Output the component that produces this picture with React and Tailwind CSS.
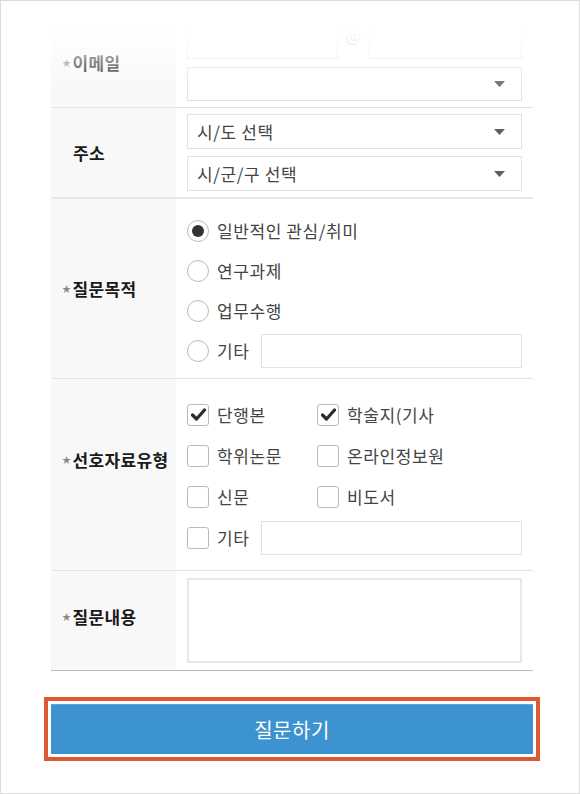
import { useState } from 'react'

const font = { fontFamily: '"Noto Sans CJK KR", "Noto Sans", sans-serif' }

function Arrow() {
  return (
    <svg width="11" height="6" viewBox="0 0 11 6" className="shrink-0">
      <path d="M0 0 H11 L5.5 6 Z" fill="#56616d" />
    </svg>
  )
}

function Select({ label, h = 'h-[35px]' }) {
  return (
    <div className={`flex items-center justify-between border border-[#e2e2e2] bg-white pl-[9px] pr-[16px] ${h}`}>
      <span className="text-[17px] tracking-[0.6px] text-[#444]">{label}</span>
      <Arrow />
    </div>
  )
}

function Label({ text, star = true, pad = '' }) {
  return (
    <div className={`flex items-center bg-[#f8f8f8] pl-[11px] ${pad}`}>
      {star ? (
        <span className="flex items-center text-[17px] font-bold tracking-[0.4px] text-[#1a1a1a]">
          <span className="mr-[1px] text-[9px] text-[#888]">★</span>
          {text}
        </span>
      ) : (
        <span className="pl-[11px] text-[17px] font-bold tracking-[0.4px] text-[#1a1a1a]">{text}</span>
      )}
    </div>
  )
}

function Radio({ checked, onClick, children }) {
  return (
    <div className="flex h-[40px] items-center" onClick={onClick}>
      <span className="flex h-[22px] w-[22px] shrink-0 items-center justify-center rounded-full border border-[#bbb] bg-white">
        {checked && <span className="h-[12px] w-[12px] rounded-full bg-[#333]" />}
      </span>
      <span className="ml-[8px] text-[17px] tracking-[0.6px] text-[#444]">{children}</span>
    </div>
  )
}

function Check({ checked, onClick, label }) {
  return (
    <div className="flex items-center" onClick={onClick}>
      <span className="flex h-[22px] w-[22px] shrink-0 items-center justify-center rounded-[3px] border border-[#bbb] bg-white">
        {checked && (
          <svg width="15" height="13" viewBox="0 0 15 13">
            <path d="M1.5 7 L5.5 11 L13.5 2" fill="none" stroke="#2b2b2b" strokeWidth="3.2" strokeLinecap="round" strokeLinejoin="round" />
          </svg>
        )}
      </span>
      <span className="ml-[8px] text-[17px] tracking-[0.6px] text-[#444]">{label}</span>
    </div>
  )
}

export default function App() {
  const [purpose, setPurpose] = useState(0)
  const [types, setTypes] = useState({ 단행본: true, '학술지(기사': true })
  const toggle = k => setTypes(t => ({ ...t, [k]: !t[k] }))

  const purposes = ['일반적인 관심/취미', '연구과제', '업무수행']
  const typeRows = [
    ['단행본', '학술지(기사'],
    ['학위논문', '온라인정보원'],
    ['신문', '비도서'],
  ]

  return (
    <div className="relative h-[794px] w-[580px] overflow-hidden border border-[#dcdcdc] bg-white" style={font}>
      <div className="pl-[50px] pr-[46px]">
        {/* 이메일 */}
        <div className="grid grid-cols-[125px_1fr] border-b border-[#e4e4e4]">
          <Label text="이메일" pad="pt-[18px]" />
          <div className="flex flex-col gap-[8px] px-[11px] pb-[6px] pt-[23px]">
            <div className="flex h-[35px] items-stretch">
              <div className="w-[151px] border border-[#e2e2e2]" />
              <div className="flex w-[31px] items-start justify-center text-[17px] leading-[22px] text-[#aaa]">@</div>
              <div className="flex-1 border border-[#e2e2e2]" />
            </div>
            <Select label="" h="h-[34px]" />
          </div>
        </div>

        {/* 주소 */}
        <div className="grid grid-cols-[125px_1fr] border-b-2 border-[#e8e8e8]">
          <Label text="주소" star={false} />
          <div className="flex flex-col gap-[7px] px-[11px] py-[6px]">
            <Select label="시/도 선택" />
            <Select label="시/군/구 선택" />
          </div>
        </div>

        {/* 질문목적 */}
        <div className="grid grid-cols-[125px_1fr] border-b border-[#e4e4e4]">
          <Label text="질문목적" />
          <div className="flex flex-col px-[11px] pb-[7px] pt-[12px]">
            {purposes.map((p, i) => (
              <Radio key={p} checked={purpose === i} onClick={() => setPurpose(i)}>
                {p}
              </Radio>
            ))}
            <div className="flex h-[40px] items-center">
              <Radio checked={purpose === 3} onClick={() => setPurpose(3)}>기타</Radio>
              <div className="ml-[12px] h-[34px] flex-1 border border-[#e2e2e2]" />
            </div>
          </div>
        </div>

        {/* 선호자료유형 */}
        <div className="grid grid-cols-[125px_1fr] border-b border-[#e4e4e4]">
          <Label text="선호자료유형" pad="pb-[30px]" />
          <div className="flex flex-col px-[11px] pb-[12px] pt-[15px]">
            {typeRows.map(row => (
              <div key={row[0]} className="grid h-[41px] grid-cols-[130px_1fr] items-center">
                {row.map(k => (
                  <Check key={k} label={k} checked={!!types[k]} onClick={() => toggle(k)} />
                ))}
              </div>
            ))}
            <div className="flex h-[41px] items-center">
              <Check label="기타" checked={!!types['기타']} onClick={() => toggle('기타')} />
              <div className="ml-[12px] h-[34px] flex-1 border border-[#e2e2e2]" />
            </div>
          </div>
        </div>

        {/* 질문내용 */}
        <div className="grid grid-cols-[125px_1fr] border-b border-[#bbb]">
          <Label text="질문내용" pad="pb-[8px]" />
          <div className="px-[11px] py-[7px]">
            <div className="h-[85px] border-2 border-[#e8e8e8]" />
          </div>
        </div>

        <div className="ml-[-7px] mr-[-7px] mt-[26px] border-4 border-[#db5a33] p-[3px]">
          <button className="flex h-[50px] w-full items-center justify-center border-t border-[#5aa6dc] bg-[#3d93cf] text-[20px] tracking-[0.5px] text-white">
            질문하기
          </button>
        </div>
      </div>

      {/* top fade */}
      <div className="pointer-events-none absolute left-0 right-0 top-0 h-[92px] bg-gradient-to-b from-white from-30% to-transparent" />
    </div>
  )
}
